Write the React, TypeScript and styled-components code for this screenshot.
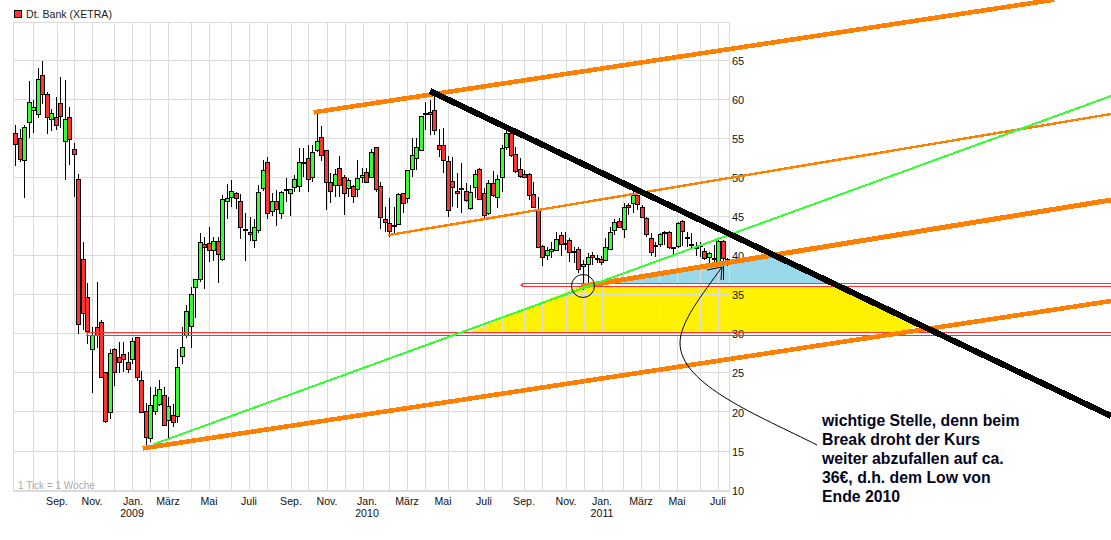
import React from "react";
import styled, { createGlobalStyle } from "styled-components";

const GlobalStyle = createGlobalStyle`
  html, body {
    margin: 0;
    padding: 0;
    background: #fff;
  }
`;

const Page = styled.div`
  position: relative;
  width: 1111px;
  height: 540px;
  overflow: hidden;
  background: #fff;
  font-family: "Liberation Sans", Arial, sans-serif;
`;

const Legend = styled.div`
  display: flex;
  align-items: center;
  gap: 4px;
  height: 22px;
  padding: 6px 0 0 14px;
  box-sizing: border-box;
`;

const Swatch = styled.span`
  width: 6px;
  height: 6px;
  background: #ff3333;
  border: 1px solid #000;
`;

const Title = styled.span`
  font-size: 10.6px;
  color: #222;
`;

const Chart = styled.svg`
  display: block;
  overflow: visible;
`;

const AxisLabel = styled.text`
  font-family: "Liberation Sans", Arial, sans-serif;
  font-size: 10.6px;
  fill: #111;
`;

const PriceLabel = styled(AxisLabel)`
  font-size: 11px;
`;

const TickNote = styled(AxisLabel)`
  fill: #aaa;
  font-size: 10px;
`;

const Note = styled.div`
  position: absolute;
  left: 822px;
  top: 411px;
  width: 240px;
  font-size: 15.8px;
  line-height: 19px;
  font-weight: 700;
  color: #05051e;
`;

// [x, high, body top, body bottom, low, up]
type Candle = [number, number, number, number, number, number];

const candles: Candle[] = [
  [15, 125, 133, 144, 166, 0], [20, 129, 138, 159, 162, 0], [24, 125, 127, 160, 198, 1],
  [29, 81, 102, 122, 138, 1], [33, 100, 107, 110, 133, 1], [38, 68, 79, 114, 118, 1],
  [42, 61, 75, 94, 104, 0], [47, 92, 94, 117, 134, 0], [51, 109, 113, 119, 131, 1],
  [56, 97, 117, 125, 130, 0], [60, 77, 103, 116, 128, 0], [65, 80, 119, 141, 180, 1],
  [69, 107, 117, 139, 165, 0], [74, 143, 149, 154, 197, 0], [78, 174, 179, 324, 334, 0],
  [83, 242, 259, 313, 330, 0], [87, 283, 297, 331, 344, 0], [92, 327, 335, 349, 393, 1],
  [97, 282, 327, 335, 348, 0], [101, 320, 322, 377, 378, 0], [105, 372, 372, 421, 423, 0],
  [110, 349, 353, 412, 419, 1], [114, 348, 349, 372, 386, 0], [119, 342, 357, 362, 373, 0],
  [123, 342, 354, 359, 372, 0], [128, 352, 362, 369, 373, 0], [132, 338, 341, 359, 364, 1],
  [137, 337, 337, 377, 381, 0], [141, 371, 380, 412, 413, 0], [146, 403, 411, 437, 447, 0],
  [150, 387, 405, 438, 442, 1], [155, 387, 395, 411, 415, 1], [159, 380, 389, 404, 406, 1],
  [164, 387, 395, 425, 426, 0], [168, 397, 406, 420, 439, 1], [173, 404, 415, 422, 427, 0],
  [177, 349, 367, 416, 423, 1], [182, 327, 347, 356, 364, 1], [186, 305, 311, 335, 338, 1],
  [191, 287, 294, 326, 348, 1], [195, 279, 279, 287, 318, 1], [200, 233, 242, 279, 282, 1],
  [204, 237, 244, 247, 289, 0], [209, 227, 243, 250, 262, 0], [213, 237, 241, 250, 261, 1],
  [218, 237, 241, 254, 283, 0], [222, 195, 199, 259, 261, 1], [227, 184, 198, 201, 219, 1],
  [231, 180, 191, 197, 207, 1], [236, 192, 193, 198, 209, 0], [240, 194, 201, 227, 239, 0],
  [245, 213, 229, 230, 261, 1], [250, 217, 232, 234, 241, 0], [254, 219, 227, 240, 248, 1],
  [258, 185, 192, 230, 233, 1], [263, 160, 170, 188, 191, 1], [267, 157, 162, 213, 219, 0],
  [272, 193, 201, 211, 216, 1], [276, 190, 201, 209, 226, 0], [281, 191, 192, 213, 219, 1],
  [286, 178, 189, 190, 202, 1], [290, 189, 189, 193, 216, 1], [294, 175, 179, 187, 192, 1],
  [299, 148, 162, 186, 192, 1], [303, 148, 162, 163, 177, 1], [308, 145, 158, 179, 192, 0],
  [312, 145, 152, 177, 182, 1], [317, 113, 141, 150, 152, 1], [321, 126, 137, 155, 161, 0],
  [326, 150, 150, 182, 210, 0], [330, 173, 182, 191, 203, 0], [335, 169, 174, 185, 197, 1],
  [339, 156, 168, 185, 197, 0], [344, 175, 177, 193, 215, 0], [348, 178, 180, 188, 197, 1],
  [353, 185, 186, 196, 203, 0], [357, 160, 178, 189, 197, 1], [362, 168, 175, 177, 183, 1],
  [366, 168, 172, 182, 183, 0], [371, 149, 152, 177, 178, 1], [376, 147, 147, 189, 192, 0],
  [380, 182, 186, 217, 229, 0], [385, 207, 219, 222, 232, 0], [389, 198, 223, 231, 237, 0],
  [394, 207, 225, 226, 233, 1], [398, 193, 194, 224, 225, 1], [403, 193, 193, 203, 213, 0],
  [407, 170, 170, 198, 203, 1], [412, 138, 155, 169, 177, 1], [416, 138, 147, 158, 170, 1],
  [421, 116, 116, 150, 151, 1], [425, 102, 113, 114, 130, 1], [430, 100, 112, 114, 135, 0],
  [434, 95, 110, 130, 135, 0], [439, 129, 145, 149, 157, 0], [443, 128, 145, 160, 173, 0],
  [448, 156, 161, 210, 217, 0], [452, 157, 181, 187, 207, 0], [457, 173, 191, 193, 208, 0],
  [461, 163, 188, 189, 213, 1], [466, 183, 191, 200, 202, 0], [470, 185, 192, 208, 210, 1],
  [475, 170, 174, 187, 198, 1], [479, 168, 169, 199, 200, 0], [484, 188, 193, 215, 218, 0],
  [488, 180, 183, 213, 215, 1], [493, 171, 183, 195, 197, 0], [497, 175, 179, 197, 208, 1],
  [502, 145, 148, 177, 192, 1], [506, 128, 133, 147, 150, 1], [511, 129, 133, 155, 157, 0],
  [515, 147, 154, 171, 173, 0], [520, 158, 169, 176, 178, 0], [524, 170, 174, 177, 178, 0],
  [529, 173, 174, 195, 200, 0], [533, 182, 194, 207, 208, 0], [538, 197, 209, 247, 248, 0],
  [542, 245, 246, 257, 266, 0], [547, 247, 250, 255, 260, 1], [551, 242, 249, 251, 258, 1],
  [556, 232, 239, 250, 251, 1], [561, 232, 235, 244, 256, 0], [565, 232, 243, 244, 250, 1],
  [569, 238, 240, 252, 262, 0], [574, 247, 251, 252, 263, 1], [578, 247, 249, 269, 273, 0],
  [583, 260, 264, 266, 290, 1], [588, 253, 257, 264, 287, 1], [592, 252, 255, 257, 265, 0],
  [597, 255, 258, 259, 263, 1], [601, 256, 259, 262, 265, 0], [605, 238, 247, 260, 261, 1],
  [610, 227, 232, 249, 250, 1], [614, 219, 222, 230, 235, 1], [619, 218, 221, 227, 228, 0],
  [624, 203, 207, 229, 238, 1], [628, 203, 205, 207, 215, 0], [633, 191, 195, 203, 213, 1],
  [637, 191, 195, 204, 210, 0], [642, 205, 207, 217, 218, 0], [646, 217, 218, 234, 237, 0],
  [651, 233, 238, 252, 256, 0], [655, 242, 245, 246, 257, 1], [660, 233, 234, 244, 247, 1],
  [664, 231, 232, 233, 245, 1], [669, 231, 232, 247, 249, 0], [673, 247, 247, 248, 255, 1],
  [678, 222, 223, 246, 248, 1], [682, 220, 221, 231, 246, 0], [687, 232, 237, 238, 247, 1],
  [691, 233, 244, 244, 248, 1], [696, 242, 247, 247, 256, 1], [700, 242, 245, 245, 257, 1],
  [704, 248, 251, 258, 260, 0], [709, 252, 253, 257, 263, 1], [714, 245, 258, 258, 263, 1],
  [718, 240, 241, 262, 263, 1], [723, 240, 241, 258, 280, 0], [727, 258, 259, 264, 266, 0],
];

const gridX = [
  13, 33, 57, 74, 92, 114, 132, 150, 168, 191, 209, 231, 249, 267, 291, 308, 327, 345, 363,
  389, 407, 425, 448, 467, 484, 502, 524, 542, 566, 584, 602, 623, 641, 659, 677, 700, 718, 729,
];
const gridY = [22, 60, 99, 138, 177, 216, 255, 294, 333, 372, 411, 451];

const prices = [
  [65, 65], [60, 104], [55, 143], [50, 182], [45, 221], [40, 260],
  [35, 299], [30, 338], [25, 377], [20, 417], [15, 456], [10, 495],
];

const months: [string, number][] = [
  ["Sep.", 57], ["Nov.", 92], ["Jan.", 133], ["März", 168], ["Mai", 209], ["Juli", 249],
  ["Sep.", 291], ["Nov.", 327], ["Jan.", 367], ["März", 407], ["Mai", 443], ["Juli", 484],
  ["Sep.", 524], ["Nov.", 566], ["Jan.", 602], ["März", 641], ["Mai", 677], ["Juli", 718],
];

const years: [string, number][] = [["2009", 132], ["2010", 367], ["2011", 602]];

const noteLines = [
  "wichtige Stelle, denn beim",
  "Break droht der Kurs",
  "weiter abzufallen auf ca.",
  "36€, d.h. dem Low von",
  "Ende 2010",
];

const App = () => {
  return (
    <Page>
      <GlobalStyle />
      <Legend>
        <Swatch />
        <Title>Dt. Bank (XETRA)</Title>
      </Legend>
      <Chart width={1111} height={518} viewBox="0 22 1111 518">
        {/* Flaechen unter dem Gitter */}
        <polygon points="470,332 580,286 835,286 918,325 905,331 890,332" fill="#fff200" />
        <polygon points="597,284 773,254 838,284" fill="#99d9ea" />

        <g shapeRendering="crispEdges" stroke="#dcdcdc">
          {gridX.map((x) => (
            <line key={x} x1={x + 0.5} y1={22} x2={x + 0.5} y2={491} />
          ))}
          {gridY.map((y) => (
            <line key={y} x1={13} y1={y + 0.5} x2={730} y2={y + 0.5} />
          ))}
          <line x1={13} y1={491} x2={730} y2={491} strokeWidth={2} />
        </g>

        {prices.map(([p, y]) => (
          <PriceLabel key={p} x={732} y={y}>
            {p}
          </PriceLabel>
        ))}
        {months.map(([m, x], i) => (
          <AxisLabel key={i} x={x} y={505} textAnchor="middle">
            {m}
          </AxisLabel>
        ))}
        {years.map(([y, x]) => (
          <AxisLabel key={y} x={x} y={517} textAnchor="middle">
            {y}
          </AxisLabel>
        ))}
        <TickNote x={18} y={489}>1 Tick = 1 Woche</TickNote>

        <g shapeRendering="crispEdges" stroke="#000">
          {candles.map(([x, hi, top, bot, lo, up]) => (
            <g key={x}>
              <line x1={x + 0.5} y1={hi} x2={x + 0.5} y2={lo} />
              <rect
                x={x - 1.5}
                y={top + 0.5}
                width={4}
                height={Math.max(bot - top, 1)}
                fill={up ? "#33ff33" : "#ff3333"}
              />
            </g>
          ))}
        </g>

        <g stroke="#ff3333" shapeRendering="crispEdges">
          <line x1={86} y1={332.5} x2={1111} y2={332.5} />
          <line x1={86} y1={335.5} x2={1111} y2={335.5} />
          <line x1={522} y1={283.5} x2={1111} y2={283.5} />
          <line x1={522} y1={286.5} x2={1111} y2={286.5} />
        </g>
        <polygon points="520,285 523,283 523,287" fill="#ff3333" />
        <polygon points="86,332 88,332 88,336" fill="#ff3333" />

        <g stroke="#ff8000" strokeLinecap="square" fill="none" shapeRendering="crispEdges">
          <line x1={316} y1={112} x2={1052} y2={0} strokeWidth={4.6} />
          <line x1={389} y1={235} x2={1111} y2={114} strokeWidth={2.4} />
          <line x1={145} y1={448} x2={1111} y2={301} strokeWidth={4.6} />
          <line x1={584} y1={286} x2={1111} y2={200} strokeWidth={5} />
        </g>

        <line
          x1={153}
          y1={444.5}
          x2={1111}
          y2={96}
          stroke="#33ff33"
          strokeWidth={2}
          shapeRendering="crispEdges"
        />
        <line
          x1={430}
          y1={91}
          x2={1111}
          y2={416}
          stroke="#000"
          strokeWidth={6}
          shapeRendering="crispEdges"
        />

        <circle cx={583} cy={286} r={11.5} fill="none" stroke="#000" />
        <path
          d="M817 445 C760 416 680 385 680 343 C680 322 702 295 722 267 M707 270 L722 267 L721 280"
          fill="none"
          stroke="#000"
        />
      </Chart>
      <Note>
        {noteLines.map((l) => (
          <div key={l}>{l}</div>
        ))}
      </Note>
    </Page>
  );
};

export default App;
